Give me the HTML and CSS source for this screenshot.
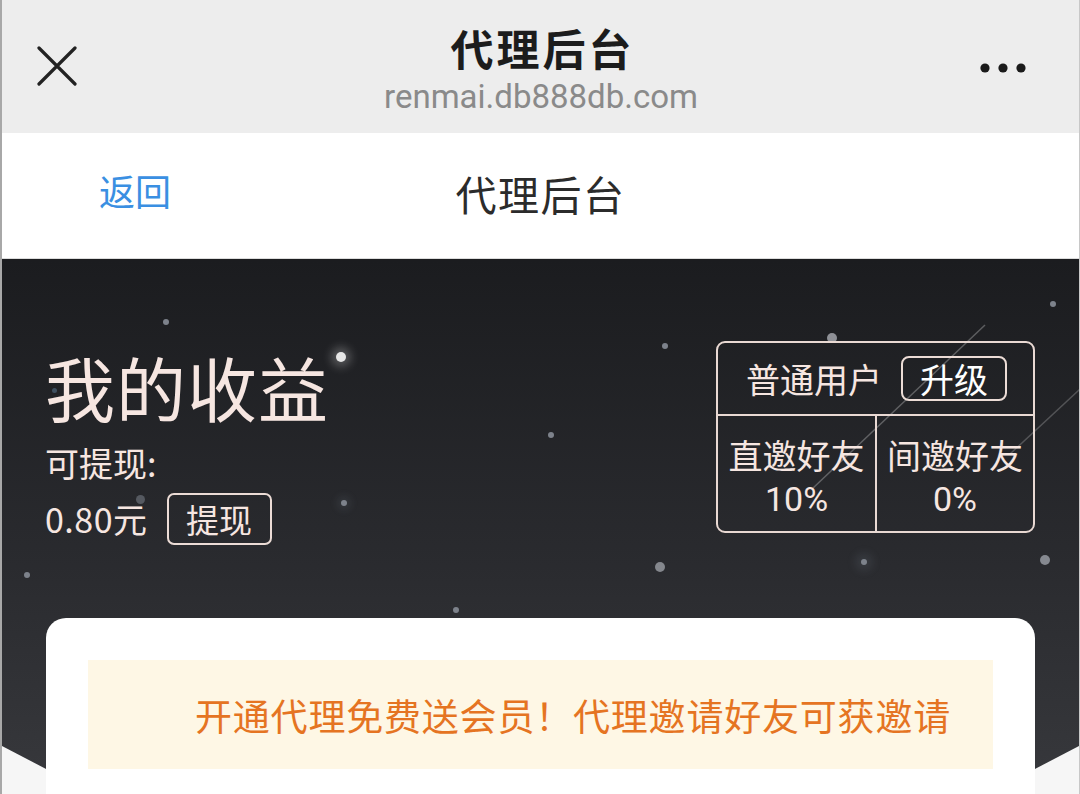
FILE: index.html
```html
<!DOCTYPE html>
<html lang="zh-CN">
<head>
    <meta charset="UTF-8">
    <meta name="viewport" content="width=device-width, initial-scale=1.0">
    <title>代理后台</title>
    <link rel="stylesheet" href="styles.css">
</head>
<body>
    <div class="page">
        <!-- WeChat style top bar -->
        <header class="wx-bar">
            <svg class="wx-close" width="40" height="40" viewBox="0 0 40 40">
                <path d="M2 2 L38 38 M38 2 L2 38" stroke="#222" stroke-width="3.2" stroke-linecap="round" fill="none"/>
            </svg>
            <div class="wx-titles">
                <div class="wx-title">代理后台</div>
                <div class="wx-url">renmai.db888db.com</div>
            </div>
            <svg class="wx-more" width="50" height="12" viewBox="0 0 50 12">
                <circle cx="6" cy="6" r="4.6" fill="#1a1a1a"/>
                <circle cx="24" cy="6" r="4.6" fill="#1a1a1a"/>
                <circle cx="42" cy="6" r="4.6" fill="#1a1a1a"/>
            </svg>
        </header>

        <!-- page nav -->
        <nav class="nav">
            <a class="nav-back" href="#">返回</a>
            <div class="nav-title">代理后台</div>
        </nav>

        <!-- earnings -->
        <section class="hero">
            <div class="stars">
                <span class="star s1"></span>
                <span class="star s2 glow"></span>
                <span class="star s3"></span>
                <span class="star s4"></span>
                <span class="star s5"></span>
                <span class="star s6"></span>
                <span class="star s7"></span>
                <span class="star s8"></span>
                <span class="star s9"></span>
                <span class="star s10"></span>
                <span class="star s11"></span>
                <span class="star s12"></span>
                <span class="star s13"></span>
                <span class="star s14"></span>
                <svg class="trails" width="1080" height="511" viewBox="0 0 1080 511">
                    <line x1="812" y1="230" x2="985" y2="66" stroke="rgba(255,255,255,0.28)" stroke-width="1.5"/>
                    <line x1="1010" y1="195" x2="1080" y2="130" stroke="rgba(255,255,255,0.22)" stroke-width="1.5"/>
                </svg>
            </div>

            <div class="income">
                <h1 class="income-title">我的收益</h1>
                <div class="income-label">可提现:</div>
                <div class="income-row">
                    <span class="income-amount">0.80元</span>
                    <button class="btn-outline btn-withdraw">提现</button>
                </div>
            </div>

            <div class="level">
                <div class="level-top">
                    <span>普通用户</span>
                    <button class="btn-outline btn-upgrade">升级</button>
                </div>
                <div class="level-bottom">
                    <div class="level-cell">
                        <div class="who">直邀好友</div>
                        <div class="pct">10%</div>
                    </div>
                    <div class="level-cell">
                        <div class="who">间邀好友</div>
                        <div class="pct">0%</div>
                    </div>
                </div>
            </div>
        </section>

        <!-- card -->
        <section class="card">
            <div class="notice">
                <div class="notice-text">开通代理免费送会员！代理邀请好友可获邀请</div>
            </div>
        </section>
    </div>
</body>
</html>
```

FILE: styles.css
```css
* {
    box-sizing: border-box;
}

body {
    margin: 0;
    font-family: "Noto Sans CJK SC", "Noto Sans", sans-serif;
    background-color: #f6f6f6;
    overflow: hidden;
}

.page {
    width: 1080px;
    height: 794px;
    border-left: 2px solid #a8a8a8;
    border-right: 1px solid #c8c8c8;
    background-color: #f6f6f6;
    overflow: hidden;
}

/* WeChat top bar */
.wx-bar {
    height: 133px;
    background-color: #ededed;
    display: flex;
    align-items: center;
    justify-content: space-between;
    padding: 0 50px 0 35px;
}

.wx-close {
    margin-top: -2px;
}

.wx-titles {
    display: flex;
    flex-direction: column;
    align-items: center;
    margin-left: 26px;
    margin-top: 4px;
}

.wx-title {
    font-size: 43px;
    font-weight: 700;
    color: #1c1c1c;
    line-height: 52px;
    letter-spacing: 3px;
    margin-left: 3px;
}

.wx-url {
    font-family: Roboto, "Noto Sans", sans-serif;
    font-size: 33px;
    color: #8a8a8a;
    line-height: 40px;
    margin-top: 4px;
}

.wx-more {
    margin-top: 2px;
}

/* nav */
.nav {
    height: 126px;
    background-color: #ffffff;
    border-bottom: 1px solid #dcdcdc;
    display: flex;
    align-items: center;
    justify-content: center;
    position: relative;
}

.nav-back {
    position: absolute;
    left: 97px;
    top: 32px;
    font-size: 36px;
    color: #3a8fe2;
    text-decoration: none;
    line-height: 50px;
}

.nav-title {
    font-size: 41px;
    color: #2b2b2b;
    letter-spacing: 1.5px;
    line-height: 50px;
    margin-top: -6px;
}

/* hero */
.hero {
    position: relative;
    height: 511px;
    background: linear-gradient(180deg, #1b1c1f 0%, #2a2b2f 60%, #36373b 100%);
    clip-path: polygon(0 0, 100% 0, 100% calc(100% - 24px), calc(100% - 46px) 100%, 46px 100%, 0 calc(100% - 24px));
    display: flex;
    justify-content: space-between;
    align-items: flex-start;
    padding: 0 44px 0 43px;
    color: #f6e6e1;
}

.stars {
    position: absolute;
    inset: 0;
    pointer-events: none;
}

.trails {
    position: absolute;
    left: -2px;
    top: 0;
}

.star {
    position: absolute;
    width: 6px;
    height: 6px;
    border-radius: 50%;
    background-color: #7d828b;
}

.star.glow {
    width: 10px;
    height: 10px;
    background-color: #e6e6e6;
    box-shadow: 0 0 10px 5px rgba(255, 255, 255, 0.25);
}

.s1 { left: 161px; top: 60px; }
.s2 { left: 334px; top: 93px; }
.s3 { left: 50px; top: 129px; width: 5px; height: 5px; background-color: #3f5060; }
.s4 { left: 134px; top: 236px; width: 9px; height: 9px; background-color: #555960; }
.s5 { left: 339px; top: 241px; box-shadow: 0 0 8px 4px rgba(160, 170, 190, 0.12); }
.s6 { left: 22px; top: 313px; }
.s7 { left: 451px; top: 348px; }
.s8 { left: 660px; top: 84px; }
.s9 { left: 825px; top: 74px; width: 10px; height: 10px; background-color: #8e9096; }
.s10 { left: 1048px; top: 42px; }
.s11 { left: 546px; top: 173px; }
.s12 { left: 653px; top: 303px; width: 10px; height: 10px; background-color: #84878d; }
.s13 { left: 859px; top: 300px; box-shadow: 0 0 10px 6px rgba(160, 170, 190, 0.12); }
.s14 { left: 1038px; top: 296px; width: 10px; height: 10px; background-color: #868990; }

.income {
    position: relative;
    margin-top: 88px;
}

.income-title {
    margin: 0;
    font-size: 70px;
    font-weight: 400;
    line-height: 80px;
    letter-spacing: 1px;
}

.income-label {
    font-size: 34px;
    line-height: 44px;
    margin-top: 14px;
}

.income-row {
    display: flex;
    align-items: center;
    gap: 19px;
    margin-top: 8px;
}

.income-amount {
    font-size: 34px;
    line-height: 44px;
    letter-spacing: 0.5px;
}

.btn-outline {
    font-family: "Noto Sans CJK SC", "Noto Sans", sans-serif;
    background: transparent;
    color: #f6e6e1;
    border: 2px solid #ecdcd6;
    border-radius: 7px;
    padding: 0;
    cursor: pointer;
}

.btn-withdraw {
    width: 105px;
    height: 52px;
    font-size: 33px;
    line-height: 46px;
}

.level {
    position: relative;
    margin-top: 82px;
    width: 319px;
    border: 2px solid #e9d9d3;
    border-radius: 9px;
    font-size: 34px;
}

.level-top {
    height: 73px;
    display: flex;
    align-items: center;
    justify-content: center;
    gap: 19px;
    border-bottom: 2px solid #e9d9d3;
    padding-left: 2px;
}

.btn-upgrade {
    width: 106px;
    height: 45px;
    font-size: 34px;
    line-height: 40px;
    border-radius: 8px;
    color: #ffffff;
}

.level-bottom {
    display: grid;
    grid-template-columns: 157px 1fr;
    height: 115px;
}

.level-cell {
    display: flex;
    flex-direction: column;
    align-items: center;
    justify-content: center;
    padding-top: 2px;
}

.level-cell + .level-cell {
    border-left: 2px solid #e9d9d3;
}

.who {
    line-height: 49px;
}

.pct {
    font-family: Roboto, "Noto Sans", sans-serif;
    line-height: 40px;
}

/* card */
.card {
    position: relative;
    margin: -152px 44px 0 44px;
    height: 300px;
    background-color: #ffffff;
    border-radius: 20px;
    padding: 42px 42px 0 42px;
}

.notice {
    height: 109px;
    background-color: #fef7e5;
    display: flex;
    align-items: center;
    padding-left: 107px;
    overflow: hidden;
}

.notice-text {
    font-size: 37px;
    color: #e57422;
    white-space: nowrap;
    line-height: 50px;
    letter-spacing: 0.8px;
}
```
